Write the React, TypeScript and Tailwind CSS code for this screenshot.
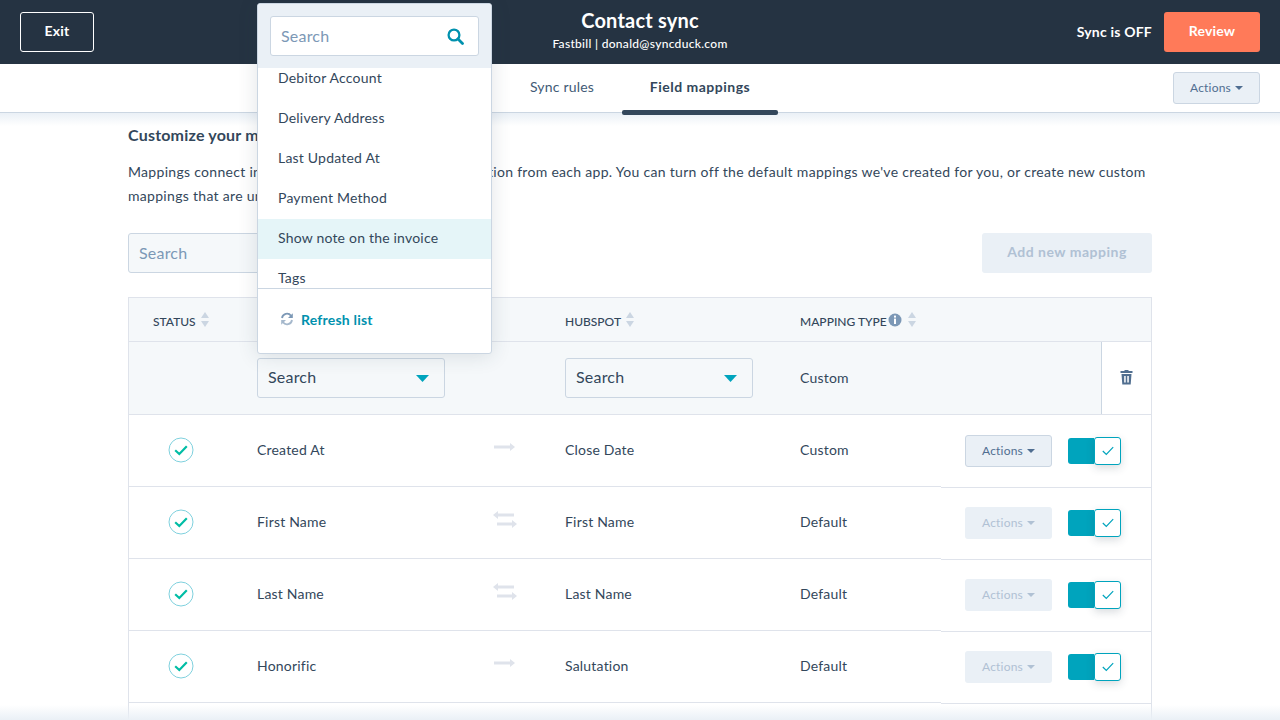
// ---------------------------------------------------------------------------
// Data
// ---------------------------------------------------------------------------

type Mapping = {
  source: string
  target: string
  type: string
  twoWay: boolean
  actionsEnabled: boolean
}

const mappings: Mapping[] = [
  { source: 'Created At', target: 'Close Date', type: 'Custom', twoWay: false, actionsEnabled: true },
  { source: 'First Name', target: 'First Name', type: 'Default', twoWay: true, actionsEnabled: false },
  { source: 'Last Name', target: 'Last Name', type: 'Default', twoWay: true, actionsEnabled: false },
  { source: 'Honorific', target: 'Salutation', type: 'Default', twoWay: false, actionsEnabled: false },
]

const fieldOptions = ['Debitor Account', 'Delivery Address', 'Last Updated At', 'Payment Method', 'Show note on the invoice', 'Tags']

// ---------------------------------------------------------------------------
// Small drawings
// ---------------------------------------------------------------------------

function SortCarets() {
  return (
    <svg width="8" height="15" viewBox="0 0 8 15" className="shrink-0">
      <path d="M4 0 L8 6 H0 Z" fill="#cbd6e2" />
      <path d="M4 15 L0 9 H8 Z" fill="#cbd6e2" />
    </svg>
  )
}

function Caret({ color }: { color: string }) {
  return (
    <svg width="8" height="4" viewBox="0 0 8 4" className="shrink-0">
      <path d="M0 0 H8 L4 4 Z" fill={color} />
    </svg>
  )
}

function InfoIcon() {
  return (
    <svg width="14" height="14" viewBox="0 0 14 14" className="mt-[1px] shrink-0">
      <circle cx="7" cy="7" r="6.5" fill="#7c98b6" />
      <rect x="6" y="2.600" width="2" height="2" fill="#fff" />
      <rect x="6" y="5.600" width="2" height="5.400" fill="#fff" />
    </svg>
  )
}

function TrashIcon() {
  return (
    <svg width="13" height="16" viewBox="0 0 13 16">
      <path d="M4.500 2 V1 H8.500 V2 H12.500 V4 H0.500 V2 Z" fill="#516f90" />
      <path fillRule="evenodd" d="M1.500 5 H11.500 L10.700 15.500 H2.300 Z M4.200 7 V13.500 H5.700 V7 Z M7.300 7 V13.500 H8.800 V7 Z" fill="#516f90" />
    </svg>
  )
}

function SearchGlyph() {
  return (
    <svg width="17" height="17" viewBox="0 0 17 17">
      <circle cx="7" cy="7" r="5.400" fill="none" stroke="#0091ae" strokeWidth="2.300" />
      <path d="M11 11 L15.500 15.500" fill="none" stroke="#0091ae" strokeWidth="2.800" strokeLinecap="round" />
    </svg>
  )
}

function RefreshGlyph() {
  return (
    <svg width="14" height="14" viewBox="0 0 14 14">
      <path d="M2 6 A5 5 0 0 1 11 3.800" fill="none" stroke="#7c98b6" strokeWidth="1.800" />
      <path d="M12.800 1.200 V6 H8 Z" fill="#7c98b6" />
      <path d="M12 8 A5 5 0 0 1 3 10.200" fill="none" stroke="#a5b8cc" strokeWidth="1.800" />
      <path d="M1.200 12.800 V8 H6 Z" fill="#a5b8cc" />
    </svg>
  )
}

function ArrowIcon({ twoWay }: { twoWay: boolean }) {
  if (twoWay) {
    return (
      <svg width="24" height="17" viewBox="0 0 24 17">
        <path d="M0 4 L5 0 V2.500 H21 V5.500 H5 V8 Z" fill="#dfe3eb" />
        <path d="M24 13 L19 9 V11.500 H4 V14.500 H19 V17 Z" fill="#dfe3eb" />
      </svg>
    )
  }
  return (
    <svg width="21" height="8" viewBox="0 0 21 8">
      <path d="M21 4 L16 0 V2.500 H0 V5.500 H16 V8 Z" fill="#dfe3eb" />
    </svg>
  )
}

function StatusIcon() {
  return (
    <svg width="26" height="26" viewBox="0 0 26 26">
      <circle cx="13" cy="13" r="12" fill="#fff" stroke="#7fd1de" strokeWidth="1" />
      <path d="M7.200 13.300 L11.300 17 L18.800 9.300" fill="none" stroke="#00bda5" strokeWidth="2.200" />
    </svg>
  )
}

function Toggle() {
  return (
    <div className="flex h-[26px] w-[53px] items-center">
      <div className="h-[26px] w-[26px] rounded-l-[3px] bg-[#00a4bd]" />
      <div className="-my-px flex h-[28px] w-[27px] items-center justify-center rounded-[3px] border border-[#00a4bd] bg-white shadow-[0_3px_8px_rgba(45,62,80,0.18)]">
        <svg width="12" height="10" viewBox="0 0 12 10">
          <path d="M0.800 5 L4.300 8.500 L11.200 1.200" fill="none" stroke="#00a4bd" strokeWidth="1.200" />
        </svg>
      </div>
    </div>
  )
}

function ActionsButton({ enabled }: { enabled: boolean }) {
  if (enabled) {
    return (
      <button className="flex h-[32px] w-[87px] items-center justify-center gap-1 rounded-[3px] border border-[#cbd6e2] bg-[#eaf0f6] text-[12px] text-[#506e91]">
        Actions <Caret color="#506e91" />
      </button>
    )
  }
  return (
    <button className="flex h-[32px] w-[87px] items-center justify-center gap-1 rounded-[3px] bg-[#eaf0f6] text-[12px] text-[#b0c1d4]">
      Actions <Caret color="#b0c1d4" />
    </button>
  )
}

function FieldSelect() {
  return (
    <div className="flex h-[40px] w-[188px] items-center justify-between rounded-[3px] border border-[#cbd6e2] bg-[#f5f8fa] pl-[10px] pr-[15px] text-[16px] text-[#33475b]">
      <span className="pb-[3px]">Search</span>
      <svg width="13" height="7" viewBox="0 0 13 7">
        <path d="M0 0 H13 L6.500 7 Z" fill="#00a4bd" />
      </svg>
    </div>
  )
}

// ---------------------------------------------------------------------------
// Dropdown lying over the page
// ---------------------------------------------------------------------------

function FieldDropdown() {
  return (
    <div className="absolute left-[257px] top-[3px] z-20 w-[235px] overflow-hidden rounded-[3px] border border-[#cbd6e2] bg-white shadow-[0_2px_20px_rgba(45,62,80,0.14)]">
      <div className="bg-[#eaf0f6] px-3 pb-[12px] pt-3">
        <div className="flex h-[40px] items-center justify-between rounded-[3px] border border-[#cbd6e2] bg-white pl-[10px] pr-[14px] text-[16px] text-[#7c98b6]">
          Search
          <SearchGlyph />
        </div>
      </div>
      <div className="h-[221px] overflow-hidden border-b border-[#cbd6e2]">
        <ul className="-mt-[9px]">
          {fieldOptions.map((option) => (
            <li
              key={option}
              className={`flex h-[40px] items-center px-5 pb-[3px] text-[14px] text-[#33475b] ${option === 'Show note on the invoice' ? 'bg-[#e5f5f8]' : ''}`}
            >
              {option}
            </li>
          ))}
        </ul>
      </div>
      <div className="flex h-[64px] items-center gap-[7px] px-[22px] pb-[4px] text-[14px] font-bold text-[#0091ae]">
        <RefreshGlyph />
        Refresh list
      </div>
    </div>
  )
}

// ---------------------------------------------------------------------------
// Page
// ---------------------------------------------------------------------------

export default function App() {
  return (
    <div className="relative h-[720px] w-[1280px] overflow-hidden bg-white font-['Lato',sans-serif] tracking-[0.2px] text-[#33475b]">
      <header className="grid h-[64px] grid-cols-[1fr_auto_1fr] items-center bg-[#253342] px-5 text-white">
        <button className="h-[40px] w-[74px] rounded-[3px] border border-white pb-[3px] text-[14px] font-bold">Exit</button>
        <div className="flex flex-col items-center pb-[5px]">
          <div className="text-[20px] font-bold leading-[24px]">Contact sync</div>
          <div className="mt-[4px] text-[12px] font-medium leading-[16px] tracking-[0.3px]">Fastbill | donald@syncduck.com</div>
        </div>
        <div className="flex items-center justify-end gap-3">
          <span className="pb-[2px] text-[14px] font-bold">Sync is OFF</span>
          <button className="h-[40px] w-[96px] rounded-[3px] bg-[#ff7a59] pb-[3px] text-[14px] font-bold">Review</button>
        </div>
      </header>

      <nav className="flex h-[49px] items-start justify-between border-b border-[#cbd6e2] pl-[502px] pr-5">
        <div className="flex">
          <div className="flex h-[48px] w-[120px] items-center justify-center pb-[4px] text-[14px] text-[#425b76]">Sync rules</div>
          <div className="relative z-10 flex h-[51px] w-[156px] flex-col">
            <div className="flex flex-1 items-center justify-center pb-[2px] text-[14px] font-bold tracking-[0.5px]">Field mappings</div>
            <div className="h-[5px] rounded-[2px] bg-[#33475b]" />
          </div>
        </div>
        <div className="mt-2">
          <ActionsButton enabled />
        </div>
      </nav>
      <div className="h-[13px] bg-gradient-to-b from-[#eaf0f6] to-white" />

      <main className="mx-[128px]">
        <h2 className="-mt-[2px] text-[16px] font-bold leading-[22px]">Customize your mappings</h2>
        <p className="mt-[14px] text-[14px] leading-[24px] tracking-[0.3px] text-[#33475b]">
          Mappings connect info across two apps, sharing information from each app. You can turn off the default mappings we've created for you, or create new custom mappings that are unique to your business.
        </p>

        <div className="mt-[25px] flex items-center justify-between">
          <div className="flex h-[40px] w-[250px] items-center rounded-[3px] border border-[#cbd6e2] bg-[#f5f8fa] pl-[10px] text-[16px] text-[#7c98b6]">
            Search
          </div>
          <button className="h-[40px] w-[170px] rounded-[3px] bg-[#eaf0f6] pb-[4px] text-[14px] font-bold tracking-[0.5px] text-[#b0c1d4]">Add new mapping</button>
        </div>

        <div className="mt-6 border-x border-t border-[#dfe3eb]">
          <div className="flex h-[44px] items-center border-b border-[#dfe3eb] bg-[#f5f8fa] text-[12px] font-medium tracking-normal">
            <div className="flex w-[128px] items-center gap-[5px] pl-6"><span className="pt-[4px]">STATUS</span> <SortCarets /></div>
            <div className="w-[308px]" />
            <div className="flex w-[235px] items-center gap-[5px]"><span className="pt-[4px]">HUBSPOT</span> <SortCarets /></div>
            <div className="flex items-center gap-[1px]">
              <span className="pt-[4px]">MAPPING TYPE</span> <InfoIcon />
              <span className="ml-[5px]"><SortCarets /></span>
            </div>
          </div>

          <div className="flex h-[73px] border-b border-[#dfe3eb]">
            <div className="flex flex-1 items-center border-r border-[#cbd6e2] bg-[#f5f8fa]">
              <div className="w-[128px]" />
              <div className="w-[308px]">
                <FieldSelect />
              </div>
              <div className="w-[235px]">
                <FieldSelect />
              </div>
              <span className="pb-[2px] text-[14px]">Custom</span>
            </div>
            <div className="flex w-[49px] items-center justify-center pb-[2px]">
              <TrashIcon />
            </div>
          </div>

          {mappings.map((m) => (
            <div key={m.source} className="flex h-[72px]">
              <div className="flex h-[72px] w-[812px] items-center border-b border-[#dfe3eb] pb-[2px] text-[14px]">
                <div className="flex w-[128px] justify-center pl-[2px] pr-[26px]">
                  <StatusIcon />
                </div>
                <div className="w-[206px]">{m.source}</div>
                <div className="mr-[18px] flex w-[84px] justify-center pb-[5px] pr-[1px]">
                  <ArrowIcon twoWay={m.twoWay} />
                </div>
                <div className="w-[235px]">{m.target}</div>
                <div>{m.type}</div>
              </div>
              <div className="mt-px flex h-[72px] flex-1 items-center gap-4 border-b border-[#dfe3eb] pb-[2px] pl-6">
                <ActionsButton enabled={m.actionsEnabled} />
                <Toggle />
              </div>
            </div>
          ))}
          <div className="h-[72px]" />
        </div>
      </main>

      <FieldDropdown />
      <div className="absolute inset-x-0 bottom-0 z-10 h-[15px] bg-gradient-to-b from-white/0 to-[#eaf0f6]" />
    </div>
  )
}
